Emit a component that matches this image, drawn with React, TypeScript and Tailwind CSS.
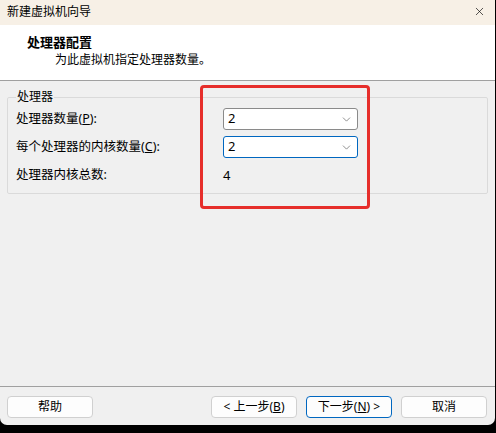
import { ChevronDown, X } from "lucide-react"

const font = { fontFamily: '"Noto Sans", "Noto Sans CJK SC", sans-serif' }

function Select({ value, focused }: { value: string; focused?: boolean }) {
  return (
    <div
      className={`flex h-[22px] w-[135px] items-center justify-between rounded-[3px] border bg-white pl-[4px] pr-[4px] text-[13px] text-black ${
        focused ? "border-[#0067c0]" : "border-[#8a8a8a]"
      }`}
    >
      <span>{value}</span>
      <ChevronDown className="h-[13px] w-[13px] text-[#555]" strokeWidth={1.2} />
    </div>
  )
}

function Btn({ children, primary }: { children: React.ReactNode; primary?: boolean }) {
  return (
    <button
      className={`flex h-[22px] w-[86px] items-center justify-center rounded-[4px] border bg-[#fdfdfd] text-[12px] text-black ${
        primary ? "border-[#0067c0]" : "border-[#d0d0d0]"
      }`}
    >
      {children}
    </button>
  )
}

export default function App() {
  return (
    <div className="h-[433px] w-[496px] bg-black" style={font}>
      <div className="relative flex h-[425px] w-[495px] flex-col overflow-hidden rounded-b-[7px] bg-[#f0f0f0]">
        {/* Title bar */}
        <div className="flex h-[25px] items-center justify-between bg-[#f7f0e6] pb-[2px] pl-[7px] pr-[9px]">
          <span className="text-[12px] text-black">新建虚拟机向导</span>
          <X className="h-[13px] w-[13px] text-black" strokeWidth={1.2} />
        </div>

        {/* Header */}
        <div className="flex h-[56px] flex-col border-b border-[#a0a0a0] bg-white pl-[27px] pt-[8px]">
          <span className="text-[13px] font-bold leading-[18px] text-black">处理器配置</span>
          <span className="pl-[28px] text-[12px] leading-[18px] text-black">为此虚拟机指定处理器数量。</span>
        </div>

        {/* Body */}
        <div className="flex flex-1 flex-col px-[7px] pt-[9px]">
          <fieldset className="h-[104px] rounded-[2px] border border-[#dadada] px-[8px]">
            <legend className="px-[1px] text-[12px] leading-[14px] text-black">处理器</legend>
            <div className="mt-[4px] grid grid-cols-[207px_1fr] items-center gap-y-[6px] text-[12.5px] text-black">
              <span>处理器数量(<u>P</u>):</span>
              <Select value="2" />
              <span>每个处理器的内核数量(<u>C</u>):</span>
              <Select value="2" focused />
              <span className="mt-[2px]">处理器内核总数:</span>
              <span className="mt-[2px] text-[13px]">4</span>
            </div>
          </fieldset>
        </div>

        {/* Footer */}
        <div className="flex h-[39px] items-start border-t border-[#a0a0a0] pl-[7px] pr-[8px] pt-[9px]">
          <Btn>帮助</Btn>
          <div className="ml-auto flex gap-[9px]">
            <Btn>
              &lt; 上一步(<u>B</u>)
            </Btn>
            <Btn primary>
              下一步(<u>N</u>) &gt;
            </Btn>
            <Btn>取消</Btn>
          </div>
        </div>

        {/* Red highlight annotation */}
        <div className="absolute left-[200px] top-[85px] h-[124px] w-[170px] rounded-[4px] border-[3px] border-[#e62e2b]" />
      </div>
    </div>
  )
}
